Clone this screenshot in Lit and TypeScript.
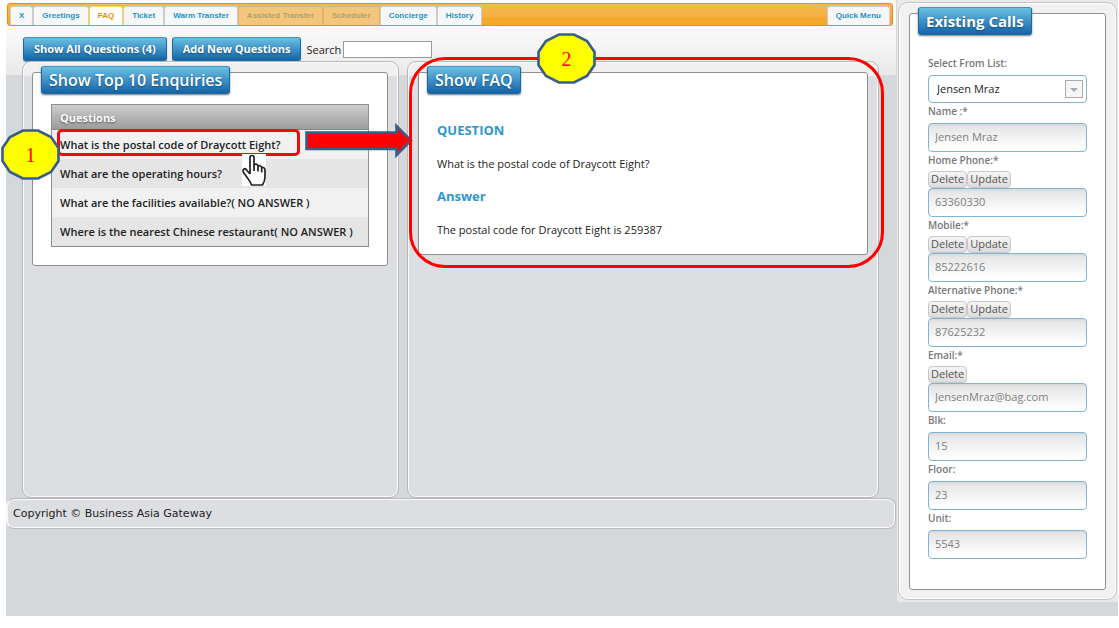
import { LitElement, html, css, svg, nothing } from "lit";
import { customElement, property } from "lit/decorators.js";
import { classMap } from "lit/directives/class-map.js";

interface Tab {
  label: string;
  state?: "active" | "disabled";
}

interface Field {
  id: string;
  label: string;
  value: string;
  actions?: string[];
}

const TABS: Tab[] = [
  { label: "X" },
  { label: "Greetings" },
  { label: "FAQ", state: "active" },
  { label: "Ticket" },
  { label: "Warm Transfer" },
  { label: "Assisted Transfer", state: "disabled" },
  { label: "Scheduler", state: "disabled" },
  { label: "Concierge" },
  { label: "History" },
];

const QUESTIONS = [
  "What is the postal code of Draycott Eight?",
  "What are the operating hours?",
  "What are the facilities available?( NO ANSWER )",
  "Where is the nearest Chinese restaurant( NO ANSWER )",
];

const FIELDS: Field[] = [
  { id: "name", label: "Name :*", value: "Jensen Mraz" },
  { id: "home", label: "Home Phone:*", value: "63360330", actions: ["Delete", "Update"] },
  { id: "mobile", label: "Mobile:*", value: "85222616", actions: ["Delete", "Update"] },
  { id: "alt", label: "Alternative Phone:*", value: "87625232", actions: ["Delete", "Update"] },
  { id: "email", label: "Email:*", value: "JensenMraz@bag.com", actions: ["Delete"] },
  { id: "blk", label: "Blk:", value: "15" },
  { id: "floor", label: "Floor:", value: "23" },
  { id: "unit", label: "Unit:", value: "5543" },
];

@customElement("step-badge")
class StepBadge extends LitElement {
  @property() step = "";

  static styles = css`
    :host {
      display: grid;
      width: 59px;
      height: 51px;
      place-items: center;
      font: 20px/24px "Liberation Serif", serif;
      color: #f00;
    }
    svg,
    span {
      grid-area: 1 / 1;
    }
    svg {
      display: block;
    }
  `;

  render() {
    return html`
      <svg width="59" height="51" viewBox="0 0 59 51" aria-hidden="true">
        <polygon
          points="22,1.5 37,1.5 50,8 57.5,19 57.5,32 50,43 37,49.5 22,49.5 9,43 1.5,32 1.5,19 9,8"
          fill="#ff0"
          stroke="#385d8a"
          stroke-width="2.6"
        />
      </svg>
      <span>${this.step}</span>
    `;
  }
}

@customElement("calls-panel")
class CallsPanel extends LitElement {
  static styles = css`
    :host {
      display: block;
      box-sizing: border-box;
      padding: 2px 1px;
      background: #e9e9e9;
      font: 11px/16px "Open Sans", sans-serif;
      color: #777;
    }
    * {
      box-sizing: border-box;
    }
    .frame {
      padding: 10px 10px 9px;
      border: 1px solid #c4c4c4;
      border-radius: 10px;
      background: #f1f1f1;
      box-shadow: inset 0 0 0 1px #fff;
    }
    .box {
      padding: 0 18px 30px;
      border: 1px solid #8f8f8f;
      border-radius: 3px;
      background: #fff;
    }
    h2 {
      width: max-content;
      height: 28px;
      margin: -7px 0 20px -10px;
      padding: 0 7px;
      border: 1px solid #1b6aa5;
      border-top-color: #3d94c4;
      border-radius: 3px;
      background: linear-gradient(#6bc0e2, #1464a8);
      box-shadow: 0 1px 2px #777;
      color: #fff;
      font: bold 15px/26px "Open Sans", sans-serif;
      text-shadow: 0 1px 2px #124d7d;
    }
    label {
      display: block;
      margin-bottom: 4px;
      font-size: 10px;
      font-weight: 600;
    }
    .with-actions label {
      margin-bottom: 3px;
    }
    .actions {
      display: flex;
    }
    .actions button {
      height: 17px;
      padding: 0 2px 1px;
      border: 1px solid #c8c8c8;
      border-radius: 4px;
      background: linear-gradient(#f6f6f6, #dcdcdc);
      color: #555;
      font: 11px/14px "Open Sans", sans-serif;
    }
    input,
    select {
      display: block;
      width: 100%;
      height: 29px;
      padding: 0 6px 2px;
      border: 1px solid #7fb5d2;
      border-radius: 4px;
      outline: none;
      font: 11px/16px "Open Sans", sans-serif;
    }
    input {
      background: linear-gradient(#d8d8d8, #e6e6e6 3px, #fff 24px);
      color: #808080;
    }
    .picker {
      display: grid;
      align-items: center;
      justify-items: end;
    }
    .picker select,
    .picker svg {
      grid-area: 1 / 1;
    }
    .picker select {
      height: 28px;
      padding: 0 8px;
      appearance: none;
      background: #fff;
      color: #222;
    }
    .picker svg {
      margin-right: 4px;
      pointer-events: none;
    }
  `;

  render() {
    return html`
      <div class="frame">
        <section class="box">
          <h2>Existing Calls</h2>
          <label for="list">Select From List:</label>
          <div class="picker">
            <select id="list">
              <option>Jensen Mraz</option>
            </select>
            <svg width="18" height="18" viewBox="0 0 18 18" aria-hidden="true">
              <rect x=".5" y=".5" width="17" height="17" fill="#f6f6f6" stroke="#aaa" />
              <path d="M5 8h8l-4 4z" fill="#aaa" />
            </svg>
          </div>
          ${FIELDS.map(
            (f) => html`
              <div class=${classMap({ field: true, "with-actions": !!f.actions })}>
                <label for=${f.id}>${f.label}</label>
                ${f.actions
                  ? html`<div class="actions">
                      ${f.actions.map((a) => html`<button type="button">${a}</button>`)}
                    </div>`
                  : nothing}
                <input id=${f.id} type="text" .value=${f.value} />
              </div>
            `
          )}
        </section>
      </div>
    `;
  }
}

@customElement("app-root")
class AppRoot extends LitElement {
  static styles = css`
    :host {
      display: block;
      padding: 0 1px 12px 6px;
      background: #fff;
      font: 11px/17px "Open Sans", sans-serif;
      color: #222;
    }
    * {
      box-sizing: border-box;
    }
    .page {
      position: relative;
      display: grid;
      grid-template-columns: minmax(0, 1fr) 221px;
      column-gap: 1px;
      align-items: start;
      min-height: calc(100vh - 12px);
      background: #d4d8db;
    }
    .main {
      padding-top: 3px;
      background: linear-gradient(#fbfbfb 26px, #e9e9e9 75px) 0 0 / 100% 75px no-repeat;
    }
    .tabs {
      display: flex;
      align-items: flex-end;
      height: 23px;
      margin: 0 3px 0 1px;
      padding: 0 2px;
      border: 1px solid #e78f08;
      border-radius: 3px;
      background: linear-gradient(#f9b850, #f6b044 60%, #f5a933 61%, #f6a828);
    }
    .tab {
      height: 19px;
      padding: 0 8px;
      border: 1px solid #ccc;
      border-bottom: 0;
      border-radius: 3px 3px 0 0;
      background: #f7f7f7;
      color: #1c94c4;
      font: bold 8px/18px "Liberation Sans", sans-serif;
      white-space: nowrap;
    }
    .tab.active {
      border-color: #fbd850;
      background: #fff;
      color: #eb8f00;
    }
    .tab.disabled {
      border-color: #e2b36a;
      background: #f4c57c;
      color: #b0a268;
    }
    .tab.menu {
      margin-left: auto;
    }
    .toolbar {
      display: flex;
      align-items: center;
      gap: 5px;
      height: 35px;
      padding: 11px 17px 0;
    }
    .action,
    h2 {
      border: 1px solid #1b6aa5;
      border-top-color: #3d94c4;
      border-radius: 3px;
      background: linear-gradient(#6bc0e2, #1464a8);
      color: #fff;
      text-shadow: 0 1px 2px #124d7d;
      white-space: nowrap;
    }
    .action {
      height: 24px;
      padding: 0 10px;
      box-shadow: 0 1px 1px #888;
      font: bold 11px/22px "Open Sans", sans-serif;
    }
    .search {
      display: flex;
      align-items: center;
      gap: 2px;
    }
    .search input {
      width: 89px;
      height: 17px;
      padding: 0 2px;
      border: 1px solid #999;
      background: #fff;
      font: 11px/15px "Open Sans", sans-serif;
    }
    .columns {
      display: grid;
      grid-template-columns: 377fr 472fr;
      gap: 8px;
      padding: 0 17px 0 16px;
    }
    .column {
      position: relative;
      min-height: 437px;
      padding: 10px;
      border: 1px solid #b9b9bd;
      border-radius: 9px;
      background: linear-gradient(#f0f0f1 13px, #dddee2 15px);
      box-shadow: inset 0 0 0 1px #fafafa;
    }
    .column:first-child {
      padding-left: 9px;
    }
    .box {
      border: 1px solid #8f8f8f;
      border-radius: 3px;
      background: #fff;
    }
    h2 {
      width: max-content;
      height: 28px;
      margin: -7px 0 10px -10px;
      padding: 0 7px;
      box-shadow: 0 1px 2px #777;
      font: 600 16px/26px "Open Sans", sans-serif;
    }
    .list {
      padding: 0 18px 18px;
    }
    table {
      width: 100%;
      border: 1px solid #8f8f8f;
      border-spacing: 0;
      font-weight: 600;
      text-align: left;
    }
    th {
      height: 25px;
      padding: 0 8px;
      border-bottom: 1px solid #888;
      background: linear-gradient(#cdcdcd, #9c9c9c);
      color: #fff;
      font-weight: bold;
      text-shadow: 0 1px 2px #555;
    }
    td {
      height: 29px;
      padding: 0 8px;
      background: #f1f1f1;
      white-space: nowrap;
    }
    tr:nth-child(even) td {
      background: #e5e5e5;
    }
    .faq {
      padding: 0 18px 16px;
    }
    .faq h2 {
      margin-bottom: 28px;
    }
    h3,
    p {
      margin: 0 0 16px;
    }
    h3 {
      color: #2e96cf;
      font: bold 13px/17px "Open Sans", sans-serif;
    }
    p:last-child {
      margin-bottom: 0;
    }
    footer {
      height: 31px;
      padding: 0 6px;
      border: 1px solid #b9b9bd;
      border-left-color: #f4f4f4;
      border-radius: 8px;
      background: #dddee2;
      box-shadow: inset 0 0 0 1px #fafafa;
      font: 11px/30px "DejaVu Sans", sans-serif;
    }
    .mark {
      position: absolute;
      z-index: 2;
      pointer-events: none;
    }
    .mark-row {
      top: 67px;
      left: 34px;
      width: 243px;
      height: 27px;
      border: 3px solid #f00b14;
      border-radius: 5px;
    }
    .mark-answer {
      top: -5px;
      left: 1px;
      right: -6px;
      height: 211px;
      border: 3px solid #f00;
      border-radius: 36px;
    }
    .mark-arrow {
      z-index: 1;
      top: 61px;
      left: 282px;
    }
    .mark-hand {
      top: 92px;
      left: 219px;
    }
    .step-one {
      top: 129px;
      left: -5px;
    }
    .step-two {
      top: -29px;
      left: 129px;
    }
  `;

  private arrow = svg`<path d="M1.5 8.5H91.5V2L106 16.5 91.5 31V25H1.5z" transform="translate(0 1)" fill="#f00" stroke="#385d8a" stroke-width="2.6"/>`;

  render() {
    return html`
      <div class="page">
        <main class="main">
          <nav class="tabs">
            ${TABS.map(
              (t) => html`<button
                type="button"
                ?disabled=${t.state === "disabled"}
                class=${classMap({
                  tab: true,
                  active: t.state === "active",
                  disabled: t.state === "disabled",
                })}
              >${t.label}</button>`
            )}
            <button type="button" class="tab menu">Quick Menu</button>
          </nav>
          <div class="toolbar">
            <button type="button" class="action">Show All Questions (4)</button>
            <button type="button" class="action">Add New Questions</button>
            <div class="search">
              <label for="search">Search</label>
              <input id="search" type="text" />
            </div>
          </div>
          <div class="columns">
            <div class="column">
              <section class="box list">
                <h2>Show Top 10 Enquiries</h2>
                <table>
                  <thead>
                    <tr><th scope="col">Questions</th></tr>
                  </thead>
                  <tbody>
                    ${QUESTIONS.map((q) => html`<tr><td>${q}</td></tr>`)}
                  </tbody>
                </table>
              </section>
              <div class="mark mark-row"></div>
              <svg class="mark mark-arrow" width="108" height="36" viewBox="0 0 108 36" aria-hidden="true">
                ${this.arrow}
              </svg>
              <svg class="mark mark-hand" width="25" height="33" viewBox="0 0 25 33" aria-hidden="true">
                <rect width="24" height="32" fill="#fff" />
                <path
                  d="M8 20V3.5Q8 1.500 10 1.500T12 3.500V11.500Q12.500 10 14.200 10.200T16 12.500Q16.500 11.300 18 11.700T19.700 14Q20.500 13 21.800 13.700T23 16V23Q23 27 20.500 31H9.500Q8 27 5.500 24L1.500 18.500Q.500 16 2 15T5 16.500L8 20M12 11V17M16 12.500V17.500M19.700 14V18.500"
                  fill="#fff"
                  stroke="#222"
                  stroke-width="1.700"
                  stroke-linejoin="round"
                />
              </svg>
            </div>
            <div class="column">
              <section class="box faq">
                <h2>Show FAQ</h2>
                <h3>QUESTION</h3>
                <p>What is the postal code of Draycott Eight?</p>
                <h3>Answer</h3>
                <p>The postal code for Draycott Eight is 259387</p>
              </section>
              <div class="mark mark-answer"></div>
              <step-badge class="mark step-two" step="2"></step-badge>
            </div>
          </div>
          <footer>Copyright © Business Asia Gateway</footer>
        </main>
        <calls-panel></calls-panel>
        <step-badge class="mark step-one" step="1"></step-badge>
      </div>
    `;
  }
}
